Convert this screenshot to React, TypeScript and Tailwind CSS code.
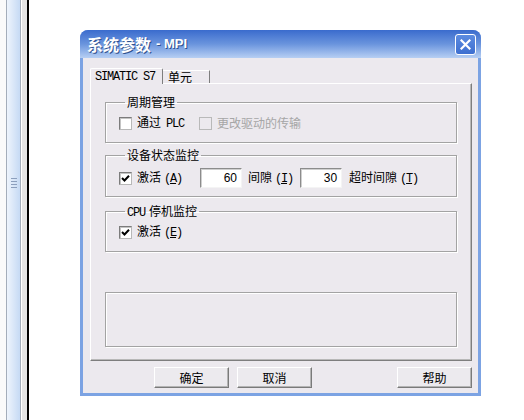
import React from 'react'
import clsx from 'clsx'

const mono = "font-['Liberation_Mono',monospace] text-[12px] tracking-[-1.2px]"

const Check = ({ checked = false, disabled = false }: { checked?: boolean; disabled?: boolean }) => (
    <span
        className={clsx(
            'w-[13px] h-[13px] shrink-0 border flex items-center justify-center',
            disabled
                ? 'bg-[#ece9ee] border-[#b9b9b9]'
                : 'bg-white border-t-[#7c7c7c] border-l-[#7c7c7c] border-r-[#b8b8b8] border-b-[#b8b8b8] shadow-[inset_1px_1px_0_#c4c4c4]'
        )}
    >
        {checked && (
            <svg width="9" height="9" viewBox="0 0 9 9">
                <polyline points="1,4 3.5,6.5 8,1.8" fill="none" stroke="#000" strokeWidth="2" />
            </svg>
        )}
    </span>
)

const Group = ({ title, children, className }: { title: React.ReactNode; children: React.ReactNode; className?: string }) => (
    <fieldset
        className={clsx(
            'border border-[#a3a3a3] shadow-[1px_1px_0_#fff,inset_1px_1px_0_#fff] px-[13px]',
            className
        )}
    >
        <legend className="ml-[6px] px-[2px] h-[14px] leading-[14px]">{title}</legend>
        {children}
    </fieldset>
)

const Field = ({ value, className }: { value: string; className?: string }) => (
    <span
        className={clsx(
            "w-[42px] h-[20px] shrink-0 bg-white border border-t-[#8c8c8c] border-l-[#8c8c8c] border-r-[#f4f4f4] border-b-[#f4f4f4] shadow-[inset_1px_1px_0_#cfcfcf] flex items-center justify-end pr-[4px] font-['Liberation_Sans',sans-serif] text-[12px]",
            className
        )}
    >
        {value}
    </span>
)

const Btn = ({ label, className }: { label: string; className?: string }) => (
    <button
        className={clsx(
            'w-[75px] h-[21px] bg-[#eceaee] border border-t-white border-l-white border-r-[#7a7a7a] border-b-[#7a7a7a] shadow-[inset_-1px_-1px_0_#b4b4b4] flex items-center justify-center leading-none',
            className
        )}
    >
        {label}
    </button>
)

// label with an access key, e.g. 激活 (A)
const Key = ({ k }: { k: string }) => (
    <span className={clsx(mono, 'ml-[3px]')}>(<u>{k}</u>)</span>
)

export default function App() {
    return (
        <div className="w-[524px] h-[420px] bg-white flex overflow-hidden text-[12px] text-black font-['Noto_Sans_CJK_SC',sans-serif]">
            {/* left edge of the window behind */}
            <div className="flex h-full shrink-0">
                <div className="w-[6px] bg-[#fafafa]" />
                <div className="w-px bg-[#a4adba]" />
                <div className="w-[13px] bg-gradient-to-r from-[#eef4fc] to-[#c6daf4] flex flex-col items-center gap-[2px] pt-[178px]">
                    <span className="w-[6px] h-px bg-[#8c9fbd]" />
                    <span className="w-[6px] h-px bg-[#8c9fbd]" />
                    <span className="w-[6px] h-px bg-[#8c9fbd]" />
                    <span className="w-[6px] h-px bg-[#8c9fbd]" />
                </div>
                <div className="w-px bg-[#a4adba]" />
                <div className="w-px bg-white" />
                <div className="w-[5px] bg-[#e4e4e4]" />
                <div className="w-[2px] bg-black" />
            </div>

            {/* dialog */}
            <div className="ml-[51px] mt-[30px] w-[401px] h-[366px] shrink-0 flex flex-col rounded-t-[8px] bg-[#7ca3e3]">
                <div className="h-[28px] shrink-0 rounded-t-[8px] bg-gradient-to-b from-[#3a6bcd] via-[#6a94dd] to-[#b7cff3] flex items-center pl-[7px] pr-[5px]">
                    <span className="text-white text-[16px] font-bold leading-none [text-shadow:1px_1px_0_#2f528f]">系统参数</span>
                    <span className="text-white text-[13px] font-bold ml-[5px] font-['Liberation_Sans',sans-serif] [text-shadow:1px_1px_0_#2f528f]">- MPI</span>
                    <span className="ml-auto w-[21px] h-[21px] rounded-[3px] border border-white bg-gradient-to-b from-[#5d8ce0] to-[#3e6fd0] flex items-center justify-center">
                        <svg width="11" height="11" viewBox="0 0 11 11">
                            <path d="M1.5 1.5 L9.5 9.5 M9.5 1.5 L1.5 9.5" stroke="#fff" strokeWidth="2.2" strokeLinecap="square" />
                        </svg>
                    </span>
                </div>

                <div className="flex-1 mx-[3px] mb-[3px] bg-[#ece9ee] flex flex-col pl-[7px] pr-[6px] pt-[10px]">
                    {/* tabs */}
                    <div className="h-[15px] flex items-end relative z-10">
                        <div className={clsx('h-[16px] -mb-px w-[73px] bg-[#ece9ee] border-t border-l border-white border-r border-r-[#7e7e7e] rounded-t-[2px] flex items-center pl-[4px]', mono)}>
                            SIMATIC S7
                        </div>
                        <div className="h-[13px] w-[47px] border-t border-t-white border-r border-r-[#7e7e7e] flex items-center pl-[5px] leading-none">
                            单元
                        </div>
                    </div>
                    <div className="h-[278px] border-t border-l border-white border-r border-b border-r-[#7e7e7e] border-b-[#7e7e7e] shadow-[inset_-1px_-1px_0_#b8b8b8] flex flex-col px-[14px]">
                        <Group title="周期管理" className="mt-[11px] pt-[7px] pb-[12px]">
                            <div className="h-[14px] flex items-center">
                                <Check />
                                <span className="ml-[5px]">通过<span className={clsx(mono, 'ml-[5px]')}>PLC</span></span>
                                <span className="ml-[15px]"><Check disabled /></span>
                                <span className="ml-[5px] text-[#a6a6a6]">更改驱动的传输</span>
                            </div>
                        </Group>
                        <Group title="设备状态监控" className="mt-[5px] pt-[6px] pb-[8px]">
                            <div className="h-[20px] flex items-center">
                                <div className="w-[81px] flex items-center">
                                    <Check checked />
                                    <span className="ml-[5px]">激活<Key k="A" /></span>
                                </div>
                                <Field value="60" />
                                <span className="ml-[6px] shrink-0">间隙<Key k="I" /></span>
                                <Field value="30" className="ml-[7px]" />
                                <span className="ml-[7px] shrink-0">超时间隙<Key k="T" /></span>
                            </div>
                        </Group>
                        <Group title={<><span className={clsx(mono, 'mr-[4px]')}>CPU</span>停机监控</>} className="mt-[7px] pt-[7px] pb-[12px]">
                            <div className="h-[14px] flex items-center">
                                <Check checked />
                                <span className="ml-[5px]">激活<Key k="E" /></span>
                            </div>
                        </Group>
                        <div className="mt-[40px] h-[55px] border border-[#a3a3a3] shadow-[1px_1px_0_#fff,inset_1px_1px_0_#fff]" />
                    </div>

                    {/* buttons */}
                    <div className="mt-[6px] flex pl-[64px]">
                        <Btn label="确定" />
                        <Btn label="取消" className="ml-[8px]" />
                        <Btn label="帮助" className="ml-auto" />
                    </div>
                </div>
            </div>
        </div>
    )
}
